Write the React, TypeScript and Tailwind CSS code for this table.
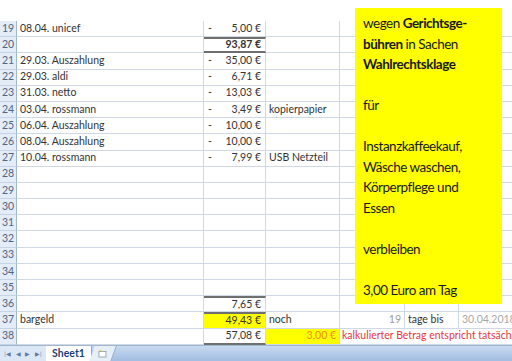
import React from "react";

type Row = {
  n: number;
  a?: string;
  dash?: boolean;
  amt?: string;
  c?: string;
};

const rows: Row[] = [
  { n: 19, a: "08.04. unicef", dash: true, amt: "5,00 €" },
  { n: 20, amt: "93,87 €" },
  { n: 21, a: "29.03. Auszahlung", dash: true, amt: "35,00 €" },
  { n: 22, a: "29.03. aldi", dash: true, amt: "6,71 €" },
  { n: 23, a: "31.03. netto", dash: true, amt: "13,03 €" },
  { n: 24, a: "03.04. rossmann", dash: true, amt: "3,49 €", c: "kopierpapier" },
  { n: 25, a: "06.04. Auszahlung", dash: true, amt: "10,00 €" },
  { n: 26, a: "08.04. Auszahlung", dash: true, amt: "10,00 €" },
  { n: 27, a: "10.04. rossmann", dash: true, amt: "7,99 €", c: "USB Netzteil" },
  { n: 28 },
  { n: 29 },
  { n: 30 },
  { n: 31 },
  { n: 32 },
  { n: 33 },
  { n: 34 },
  { n: 35 },
  { n: 36, amt: "7,65 €" },
  { n: 37, a: "bargeld", amt: "49,43 €", c: "noch" },
  { n: 38, amt: "57,08 €" },
];

const cell = "h-full border-r border-b border-[#d0d7e5] flex items-center whitespace-nowrap overflow-hidden shrink-0";

function Header({ n }: { n: number }) {
  return (
    <div className="h-full w-[17px] shrink-0 bg-[#e4ecf7] border-r border-b border-r-[#9eb6ce] border-b-[#c5d3e6] flex items-center justify-center text-[#4f6584]">
      {n}
    </div>
  );
}

function SheetRow({ r }: { r: Row }) {
  let bBorder = "";
  if (r.n === 20) bBorder = "border-t-2 border-t-[#6f6f6f] border-b-2 border-b-[#6f6f6f] font-bold";
  if (r.n === 36) bBorder = "border-t-2 border-t-[#6f6f6f]";
  if (r.n === 37) bBorder = "border-t-2 border-t-[#6f6f6f] bg-[#ffff00]";
  if (r.n === 38) bBorder = "border-b-2 border-b-[#6f6f6f]";
  return (
    <div className="flex h-[16.2px]">
      <Header n={r.n} />
      <div className={`${cell} w-[187px] pl-[3px]`}>{r.a}</div>
      <div className={`${cell} w-[62px] pl-[4px] pr-[4px] justify-between ${bBorder}`}>
        <span>{r.dash ? "-" : ""}</span>
        <span>{r.amt}</span>
      </div>
      {r.n === 38 ? (
        <>
          <div className={`${cell} w-[74px] bg-[#ffff00] justify-end pr-[3px] text-[#f08a20]`}>3,00 €</div>
          <div className="h-full border-b border-[#d0d7e5] flex items-center whitespace-nowrap overflow-visible pl-[2px] text-[#e8363e] flex-1">
            kalkulierter Betrag entspricht tatsächlich
          </div>
        </>
      ) : r.n === 37 ? (
        <>
          <div className={`${cell} w-[74px] pl-[3px]`}>{r.c}</div>
          <div className={`${cell} w-[65px] justify-end pr-[3px] text-[#9a9a9a]`}>19</div>
          <div className={`${cell} w-[54px] pl-[3px]`}>tage bis</div>
          <div className={`${cell} w-[60px] pl-[3px] text-[#a8a8a8]`}>30.04.2018</div>
        </>
      ) : (
        <>
          <div className={`${cell} w-[74px] pl-[3px]`}>{r.c}</div>
          <div className={`${cell} w-[65px]`} />
          <div className={`${cell} w-[54px]`} />
          <div className={`${cell} w-[60px]`} />
        </>
      )}
    </div>
  );
}

export default function App() {
  return (
    <div
      className="relative w-[512px] h-[361px] overflow-hidden bg-white text-[10.5px] text-[#333]"
      style={{ fontFamily: "Lato, 'Open Sans', sans-serif" }}
    >
      <div className="flex flex-col h-full">
        <div className="h-[21px] shrink-0" />
        {rows.map((r) => (
          <SheetRow key={r.n} r={r} />
        ))}
        {/* tab bar */}
        <div className="flex-1 flex items-stretch border-t border-[#9eb6ce] bg-gradient-to-b from-[#c9daf0] to-[#9fbbe0]">
          <div className="w-[46px] flex items-center justify-around px-[2px] bg-[#dce7f5] text-[#5d7aa8] text-[6px]">
            <span>|◀</span>
            <span>◀</span>
            <span>▶</span>
            <span>▶|</span>
          </div>
          <div className="w-[46px] bg-white flex items-center justify-center font-bold text-[#1e3f73] text-[10.5px] border-r border-[#8fa9cf]">
            Sheet1
          </div>
          <div className="w-[22px] bg-[#e6eef8] flex items-center justify-center border-r border-[#8fa9cf] -skew-x-[20deg]">
            <svg width="10" height="8" viewBox="0 0 10 8" className="skew-x-[20deg]">
              <rect x="1" y="1.5" width="7" height="5.5" fill="#fff" stroke="#8a9ab0" strokeWidth="0.8" />
              <path d="M1 1 L3 0 L4 2 Z" fill="#e8b830" />
            </svg>
          </div>
          <div className="flex-1" />
        </div>
      </div>

      {/* text box */}
      <div
        className="absolute left-[355px] top-[8px] w-[147px] h-[296px] bg-[#ffff00] pl-[8px] pt-[5px] text-[13.5px] leading-[20.5px] tracking-[-0.5px] text-[#1a1a1a]"
        style={{ fontFamily: "Lato, 'Open Sans', sans-serif" }}
      >
        <div>
          wegen <b>Gerichtsge-</b>
        </div>
        <div>
          <b>bühren</b> in Sachen
        </div>
        <div>
          <b>Wahlrechtsklage</b>
        </div>
        <div>&nbsp;</div>
        <div>für</div>
        <div>&nbsp;</div>
        <div>Instanzkaffeekauf,</div>
        <div>Wäsche waschen,</div>
        <div>Körperpflege und</div>
        <div>Essen</div>
        <div>&nbsp;</div>
        <div>verbleiben</div>
        <div>&nbsp;</div>
        <div>3,00 Euro am Tag</div>
      </div>
    </div>
  );
}
